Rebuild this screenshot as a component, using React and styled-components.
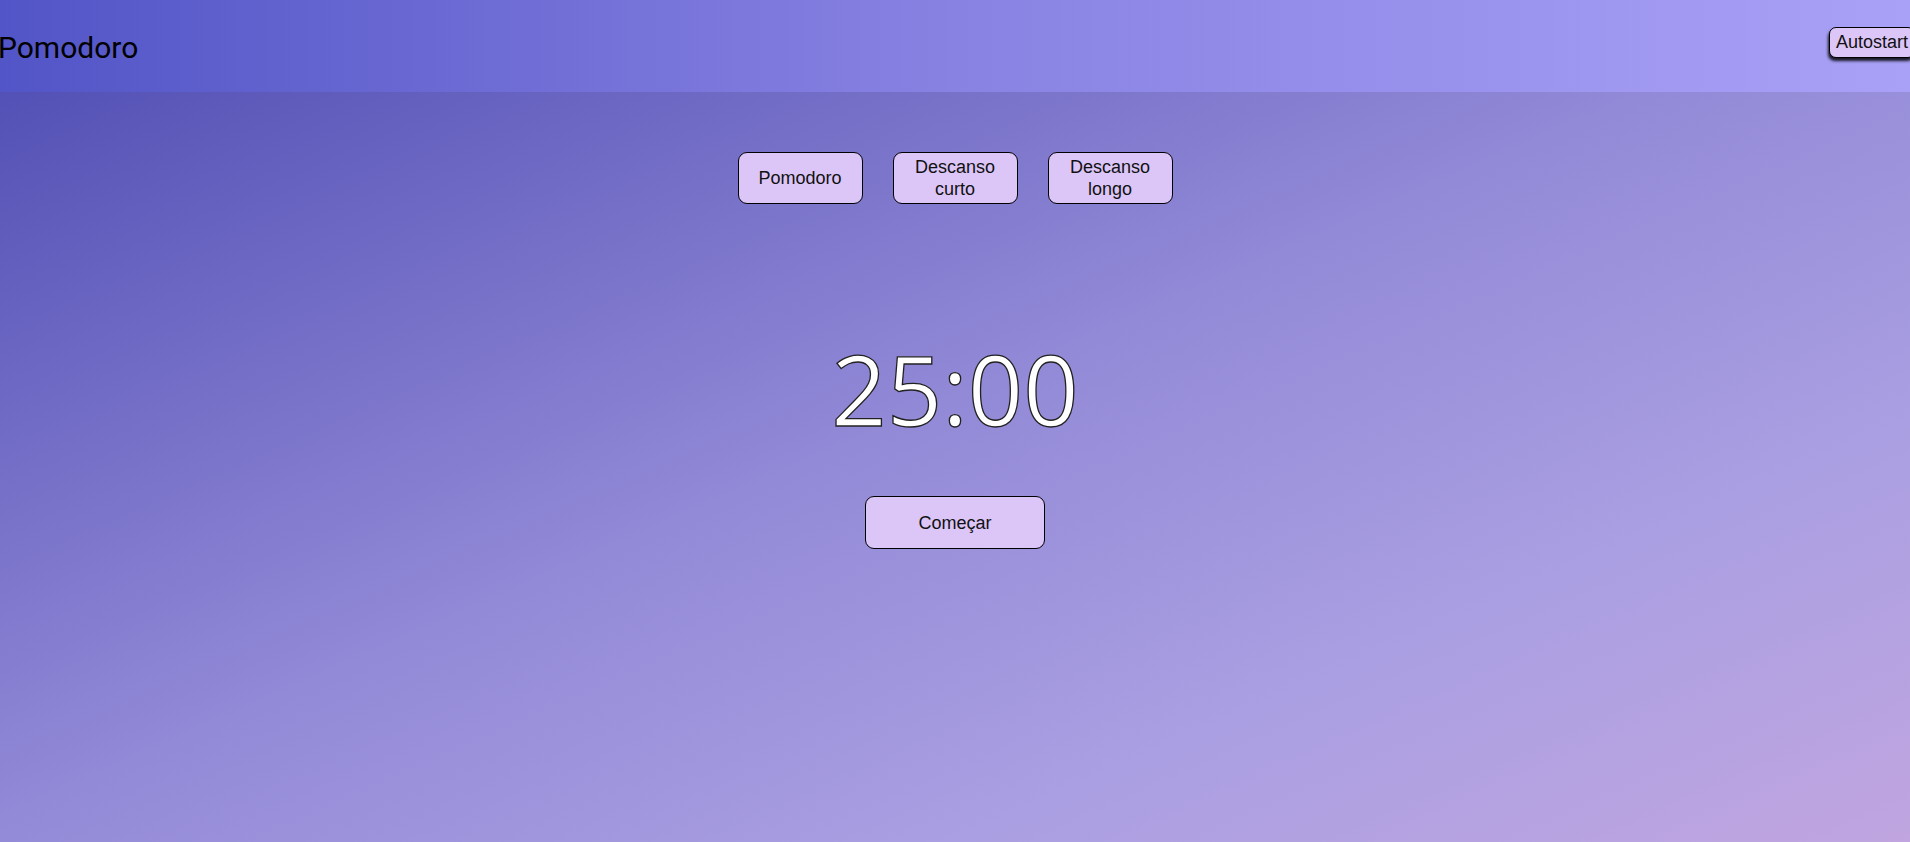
import React, { useState } from "react";
import styled, { createGlobalStyle } from "styled-components";

const GlobalStyle = createGlobalStyle`
  * {
    box-sizing: border-box;
  }
  html,
  body {
    margin: 0;
    padding: 0;
    overflow: hidden;
  }
  body {
    font-family: "Liberation Sans", Arial, sans-serif;
  }
`;

const Page = styled.div`
  min-height: 100vh;
  width: 100%;
  background: linear-gradient(
    to bottom right,
    #4b4ab1 0%,
    #948bd8 50%,
    #aa9fe2 75%,
    #c0a5e0 100%
  );
`;

const Header = styled.header`
  height: 92px;
  display: flex;
  align-items: center;
  justify-content: space-between;
  background: linear-gradient(to right, #5255c7, #8882e2 50%, #a9a1f7);
`;

const Title = styled.h1`
  margin: 2px 0 0 -2px;
  font-family: Roboto, "Open Sans", sans-serif;
  font-size: 30px;
  font-weight: 400;
  color: #000;
`;

const AutoButton = styled.button`
  margin-right: -5px;
  margin-top: -7px;
  height: 31px;
  padding: 0 6px;
  font-family: "Liberation Sans", Arial, sans-serif;
  font-size: 18px;
  color: #111;
  background: #dcc6f8;
  border: 1px solid #000;
  border-radius: 7px;
  box-shadow: -1px 3px 3px rgba(0, 0, 0, 0.85);
  cursor: pointer;
`;

const Main = styled.main`
  display: flex;
  flex-direction: column;
  align-items: center;
  padding-top: 60px;
`;

const ModeRow = styled.div`
  display: flex;
  gap: 30px;
`;

const PillButton = styled.button`
  width: ${(p) => p.$w}px;
  height: ${(p) => p.$h}px;
  padding: 0 8px;
  font-family: "Liberation Sans", Arial, sans-serif;
  font-size: 18px;
  line-height: 22px;
  color: #111;
  background: #dcc6f8;
  border: 1px solid #000;
  border-radius: 9px;
  cursor: pointer;
`;

const Timer = styled.div`
  margin-top: 119px;
  font-family: "Open Sans", "Noto Sans", sans-serif;
  font-size: 97px;
  line-height: 131px;
  color: #fff;
  -webkit-text-stroke: 1.3px #222;
  letter-spacing: 0;
`;

const StartButton = styled(PillButton)`
  margin-top: 42px;
`;

const modes = [
  { id: "pomodoro", label: "Pomodoro" },
  { id: "short", label: "Descanso curto" },
  { id: "long", label: "Descanso longo" },
];

const App = () => {
  const [mode, setMode] = useState("pomodoro");
  return (
    <>
      <GlobalStyle />
      <Page>
        <Header>
          <Title>Pomodoro</Title>
          <AutoButton>Autostart</AutoButton>
        </Header>
        <Main>
          <ModeRow>
            {modes.map((m) => (
              <PillButton
                key={m.id}
                $w={125}
                $h={52}
                onClick={() => setMode(m.id)}
              >
                {m.label}
              </PillButton>
            ))}
          </ModeRow>
          <Timer>25:00</Timer>
          <StartButton $w={180} $h={53}>
            Começar
          </StartButton>
        </Main>
      </Page>
    </>
  );
};

export default App;
